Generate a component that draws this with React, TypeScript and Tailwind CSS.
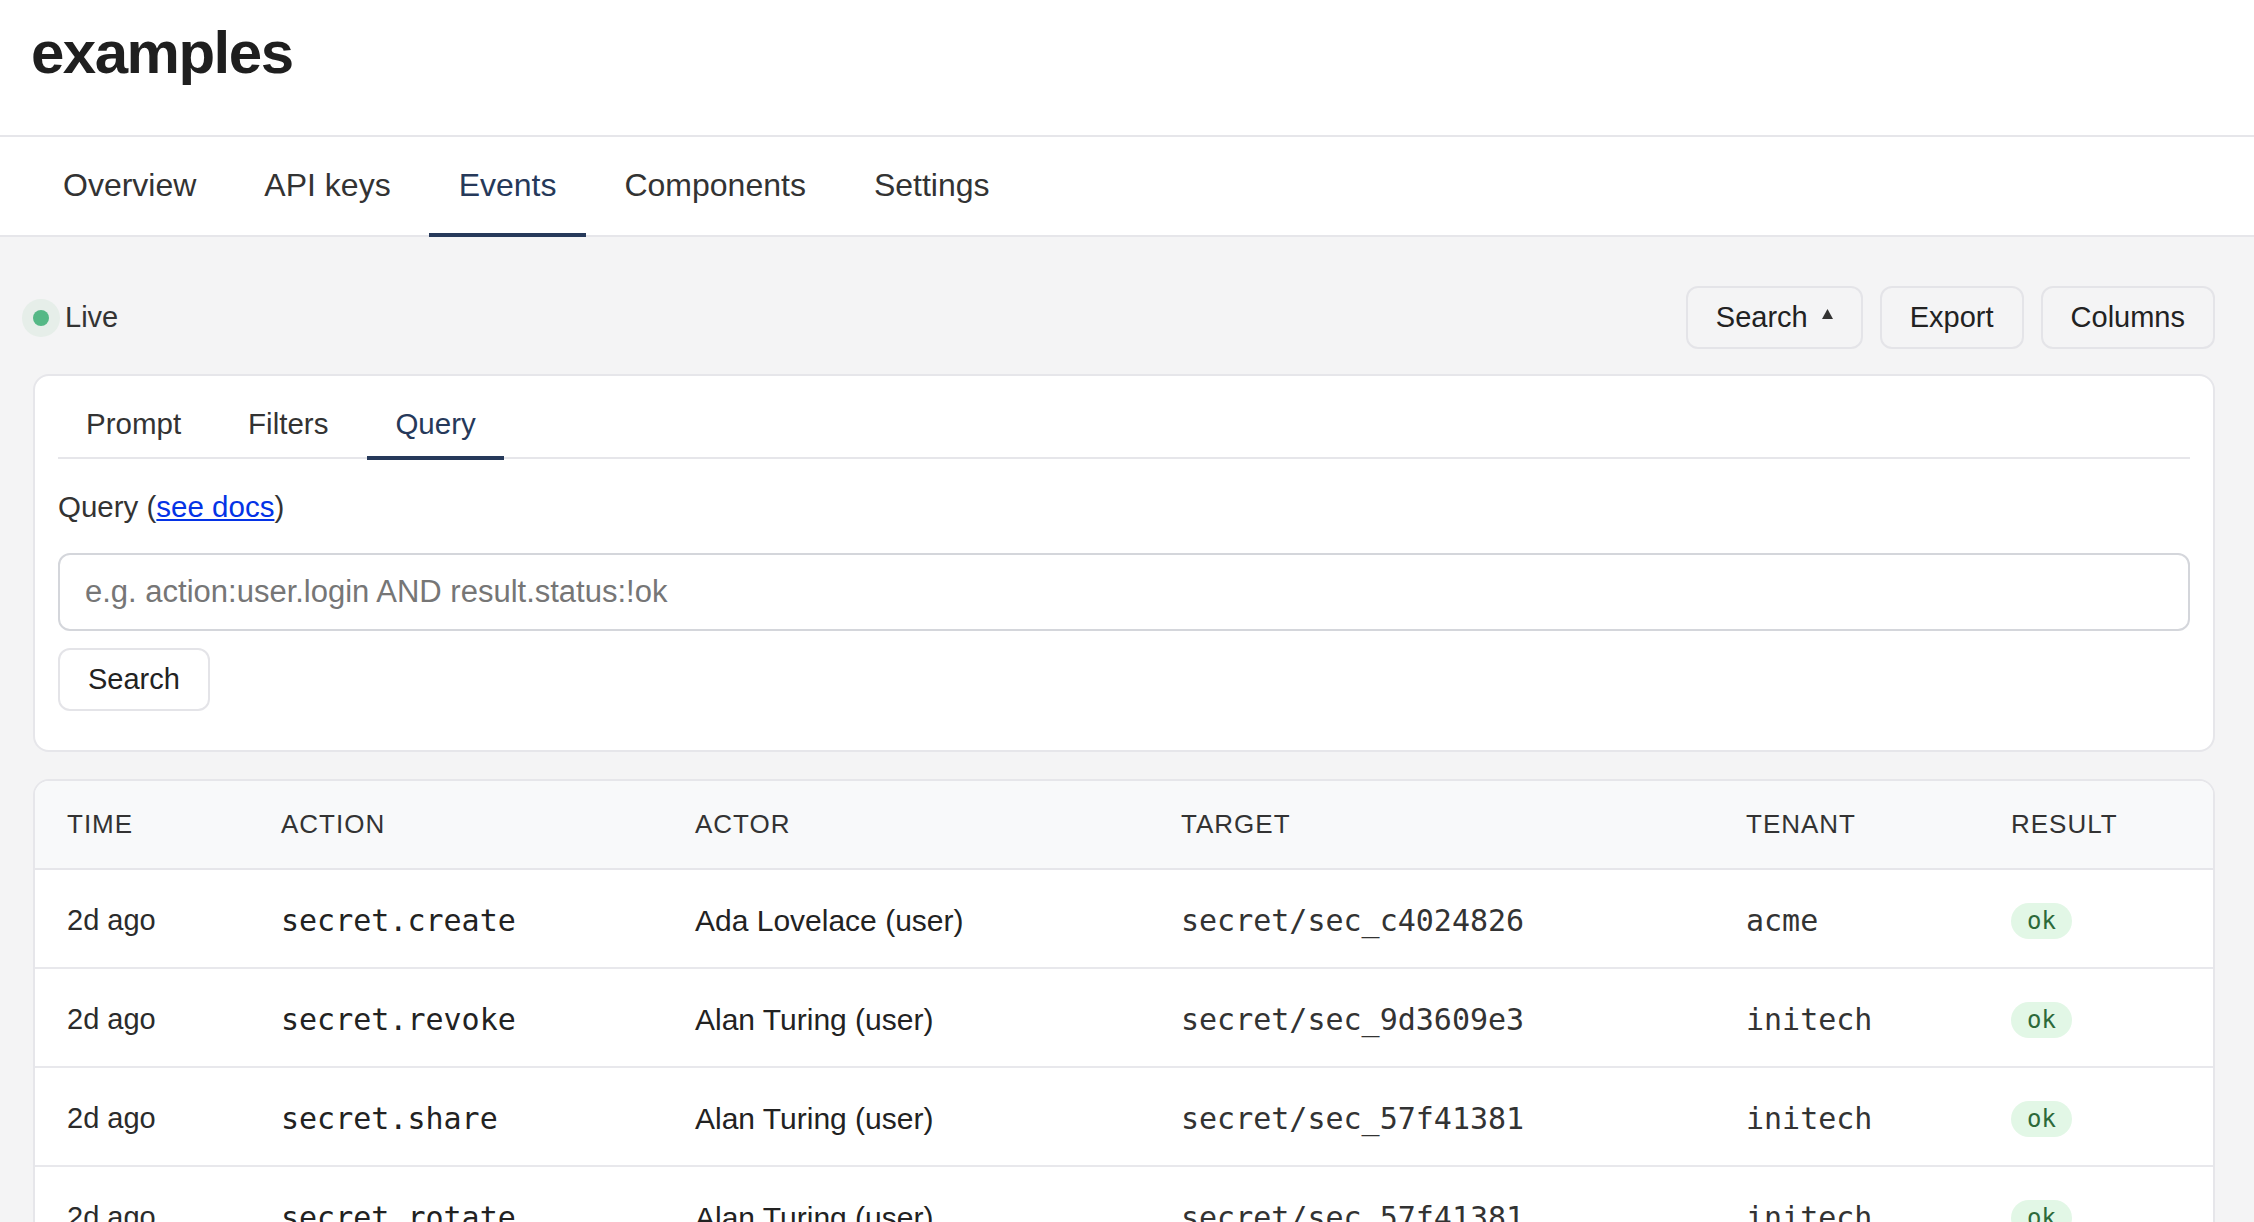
import React, { useState } from 'react';

type EventRow = {
  time: string;
  action: string;
  actor: string;
  target: string;
  tenant: string;
  result: string;
};

const events: EventRow[] = [
  { time: '2d ago', action: 'secret.create', actor: 'Ada Lovelace (user)', target: 'secret/sec_c4024826', tenant: 'acme', result: 'ok' },
  { time: '2d ago', action: 'secret.revoke', actor: 'Alan Turing (user)', target: 'secret/sec_9d3609e3', tenant: 'initech', result: 'ok' },
  { time: '2d ago', action: 'secret.share', actor: 'Alan Turing (user)', target: 'secret/sec_57f41381', tenant: 'initech', result: 'ok' },
  { time: '2d ago', action: 'secret.rotate', actor: 'Alan Turing (user)', target: 'secret/sec_57f41381', tenant: 'initech', result: 'ok' },
  { time: '2d ago', action: 'secret.create', actor: 'Alan Turing (user)', target: 'secret/sec_57f41381', tenant: 'initech', result: 'ok' },
];

const navTabs = ['Overview', 'API keys', 'Events', 'Components', 'Settings'];
const searchTabs = ['Prompt', 'Filters', 'Query'];

const cols = 'grid grid-cols-[214px_414px_486px_565px_265px_1fr]';

export default function App() {
  const [nav, setNav] = useState('Events');
  const [mode, setMode] = useState('Query');
  const [query, setQuery] = useState('');

  return (
    <div className="h-screen overflow-hidden bg-[#f4f4f5] font-['Liberation_Sans',Arial,sans-serif] text-[#222]">
      <header className="h-[137px] border-b-2 border-[#e6e6ea] bg-white pl-[31px] pt-[17px]">
        <h1 className="text-[60px] leading-[72px] font-bold tracking-[-1.5px] text-[#1f1f1f]">
          examples
        </h1>
      </header>

      <nav className="flex h-[100px] gap-[8px] border-b-2 border-[#e6e6ea] bg-white pl-[33px]">
        {navTabs.map((tab) => (
          <button
            key={tab}
            onClick={() => setNav(tab)}
            className={
              tab === nav
                ? 'flex h-[100px] items-center border-b-4 border-[#26395a] px-[30px] text-[32px] text-[#26395a]'
                : 'flex h-[100px] items-center border-b-4 border-transparent px-[30px] text-[32px] text-[#333]'
            }
          >
            {tab}
          </button>
        ))}
      </nav>

      <main className="pl-[33px] pr-[39px] pt-[49px]">
        <div className="flex h-[63px] items-center justify-between">
          <div className="flex items-center gap-[16px]">
            <span className="h-[16px] w-[16px] rounded-full bg-[#55b886] shadow-[0_0_0_11px_#e6eee9]" />
            <span className="text-[29px] text-[#333]">Live</span>
          </div>
          <div className="flex gap-[17px]">
            <button className="flex h-[63px] items-center gap-[14px] rounded-[12px] border-2 border-[#e4e4e8] px-[28px] text-[29px]">
              Search
              <svg width="11" height="10" viewBox="0 0 11 10" className="mb-[8px]">
                <polygon points="5.5,0 11,10 0,10" fill="#333" />
              </svg>
            </button>
            <button className="h-[63px] rounded-[12px] border-2 border-[#e4e4e8] px-[28px] text-[29px]">
              Export
            </button>
            <button className="h-[63px] rounded-[12px] border-2 border-[#e4e4e8] px-[28px] text-[29px]">
              Columns
            </button>
          </div>
        </div>

        <section className="mt-[25px] rounded-[16px] border-2 border-[#e6e6ea] bg-white px-[23px] pt-[12px] pb-[39px]">
          <div className="flex h-[71px] gap-[11px] border-b-2 border-[#e6e6ea]">
            {searchTabs.map((tab) => (
              <button
                key={tab}
                onClick={() => setMode(tab)}
                className={
                  tab === mode
                    ? 'flex h-[72px] items-center border-b-4 border-[#26395a] px-[28px] pt-[4px] text-[29.5px] text-[#26395a]'
                    : 'flex h-[72px] items-center border-b-4 border-transparent px-[28px] pt-[4px] text-[29.5px] text-[#333]'
                }
              >
                {tab}
              </button>
            ))}
          </div>

          <label className="mt-[26px] block text-[29.5px] leading-[44px] text-[#333]">
            Query (
            <a href="#" className="text-[#0433e6] underline">
              see docs
            </a>
            )
          </label>
          <input
            value={query}
            onChange={(e) => setQuery(e.target.value)}
            placeholder="e.g. action:user.login AND result.status:!ok"
            className="mt-[24px] block h-[78px] w-full rounded-[12px] border-2 border-[#d4d6db] px-[25px] text-[31px] outline-none placeholder:text-[#767676]"
          />
          <div className="mt-[17px]">
            <button className="h-[63px] rounded-[12px] border-2 border-[#e4e4e8] bg-white px-[28px] text-[29px]">
              Search
            </button>
          </div>
        </section>

        <section className="mt-[27px] overflow-hidden rounded-[16px] border-2 border-[#e6e6ea] bg-white">
          <div className={`${cols} h-[89px] items-center border-b-2 border-[#e6e6ea] bg-[#f8f9fa] text-[26px] tracking-[1px] text-[#333]`}>
            <div className="pl-[32px]">TIME</div>
            <div className="pl-[32px]">ACTION</div>
            <div className="pl-[32px]">ACTOR</div>
            <div className="pl-[32px]">TARGET</div>
            <div className="pl-[32px]">TENANT</div>
            <div className="pl-[32px]">RESULT</div>
          </div>
          {events.map((ev, i) => (
            <div key={i} className={`${cols} h-[99px] items-center border-b-2 border-[#e8e8ec] pt-[4px]`}>
              <div className="pl-[32px] text-[29px] text-[#2b2b2b]">{ev.time}</div>
              <div className="pl-[32px] font-['DejaVu_Sans_Mono',monospace] text-[30px]">{ev.action}</div>
              <div className="pl-[32px] text-[30px]">{ev.actor}</div>
              <div className="pl-[32px] font-['DejaVu_Sans_Mono',monospace] text-[30px] text-[#333]">{ev.target}</div>
              <div className="pl-[32px] font-['DejaVu_Sans_Mono',monospace] text-[30px] text-[#333]">{ev.tenant}</div>
              <div className="pl-[32px]">
                <span className="inline-flex h-[36px] items-center rounded-full bg-[#e2f7e6] px-[16px] font-['DejaVu_Sans_Mono',monospace] text-[24px] text-[#2d6a3a]">
                  {ev.result}
                </span>
              </div>
            </div>
          ))}
        </section>
      </main>
    </div>
  );
}
